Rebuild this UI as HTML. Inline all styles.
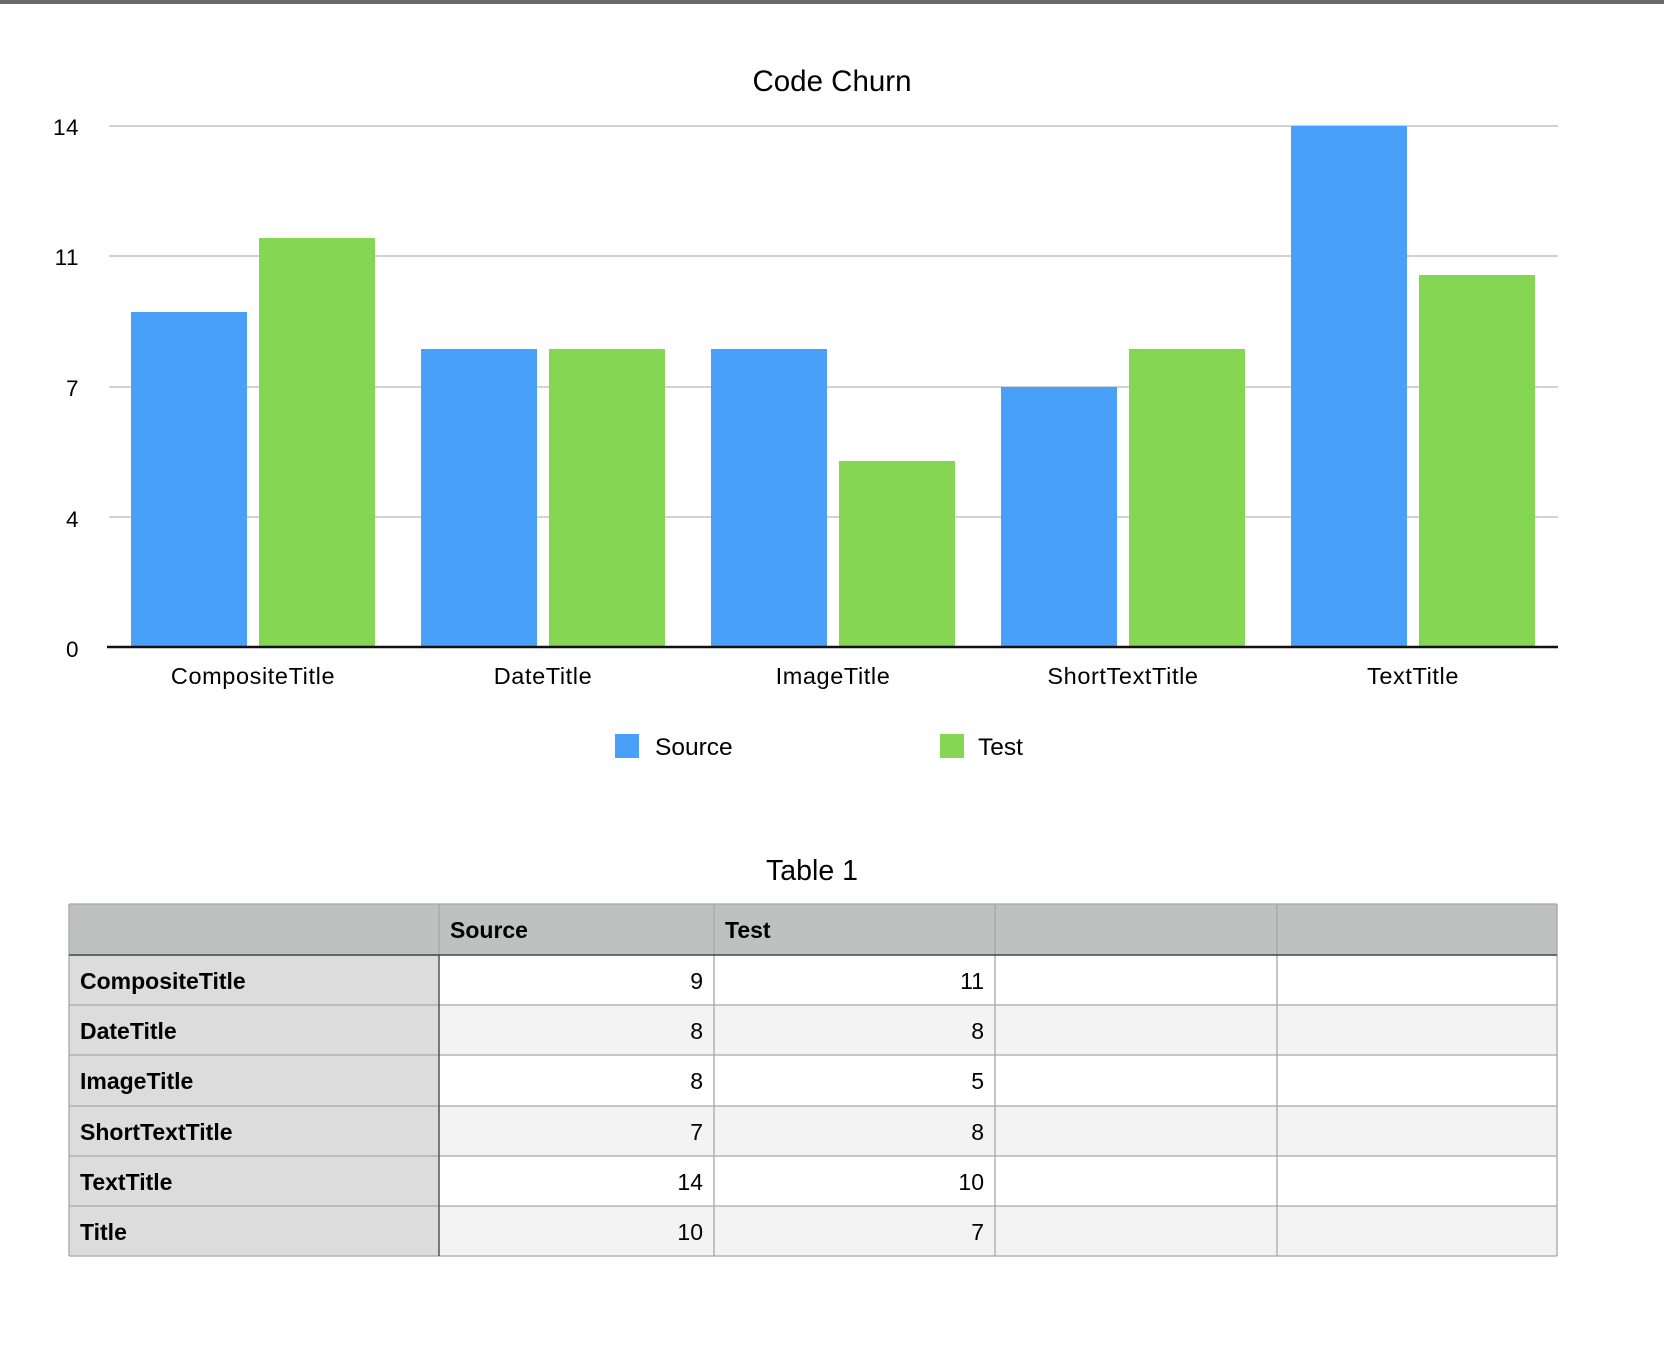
<!DOCTYPE html>
<html><head><meta charset="utf-8"><style>
html,body{margin:0;padding:0;background:#fff;width:1664px;height:1352px;overflow:hidden}
svg{display:block}
text{font-family:"Liberation Sans",Arial,sans-serif;fill:#000}
</style></head><body>
<svg width="1664" height="1352" viewBox="0 0 1664 1352" xmlns="http://www.w3.org/2000/svg">
<rect x="0" y="0" width="1664" height="4" fill="#6b6968"/>
<text x="832" y="91" font-size="29.5" text-anchor="middle">Code Churn</text>
<g stroke="#c4c4c4" stroke-width="1.5">
<line x1="109" y1="126" x2="1558" y2="126"/>
<line x1="109" y1="256" x2="1558" y2="256"/>
<line x1="109" y1="387" x2="1558" y2="387"/>
<line x1="109" y1="517" x2="1558" y2="517"/>
</g>
<g font-size="22.5" text-anchor="end" letter-spacing="0.5">
<text x="79" y="135">14</text>
<text x="79" y="265">11</text>
<text x="79" y="396">7</text>
<text x="79" y="527">4</text>
<text x="79" y="657">0</text>
</g>
<g fill="#48a0f8">
<rect x="131" y="312" width="116" height="335"/>
<rect x="421" y="349" width="116" height="298"/>
<rect x="711" y="349" width="116" height="298"/>
<rect x="1001" y="387" width="116" height="260"/>
<rect x="1291" y="126" width="116" height="521"/>
</g>
<g fill="#84d653">
<rect x="259" y="238" width="116" height="409"/>
<rect x="549" y="349" width="116" height="298"/>
<rect x="839" y="461" width="116" height="186"/>
<rect x="1129" y="349" width="116" height="298"/>
<rect x="1419" y="275" width="116" height="372"/>
</g>
<line x1="107" y1="647" x2="1558" y2="647" stroke="#111" stroke-width="2.5"/>
<g font-size="23.5" text-anchor="middle" letter-spacing="0.6">
<text x="253" y="684">CompositeTitle</text>
<text x="543" y="684">DateTitle</text>
<text x="833" y="684">ImageTitle</text>
<text x="1123" y="684">ShortTextTitle</text>
<text x="1413" y="684">TextTitle</text>
</g>
<rect x="615" y="734" width="24" height="24" fill="#48a0f8"/>
<text x="655" y="755" font-size="24.5">Source</text>
<rect x="940" y="734" width="24" height="24" fill="#84d653"/>
<text x="978" y="755" font-size="24.5">Test</text>
<text x="812" y="880" font-size="28.5" text-anchor="middle">Table 1</text>
<rect x="69" y="904" width="1488" height="51" fill="#bfc1c0"/>
<rect x="69" y="955" width="370" height="301" fill="#dcdcdc"/>
<rect x="439" y="955" width="1118" height="50" fill="#fff"/>
<rect x="439" y="1005" width="1118" height="50" fill="#f3f3f3"/>
<rect x="439" y="1055" width="1118" height="51" fill="#fff"/>
<rect x="439" y="1106" width="1118" height="50" fill="#f3f3f3"/>
<rect x="439" y="1156" width="1118" height="50" fill="#fff"/>
<rect x="439" y="1206" width="1118" height="50" fill="#f3f3f3"/>
<g stroke="#a8a8a8" stroke-width="1.3">
<line x1="69" y1="1005" x2="1557" y2="1005"/>
<line x1="69" y1="1055" x2="1557" y2="1055"/>
<line x1="69" y1="1106" x2="1557" y2="1106"/>
<line x1="69" y1="1156" x2="1557" y2="1156"/>
<line x1="69" y1="1206" x2="1557" y2="1206"/>
<line x1="69" y1="1256" x2="1557" y2="1256"/>
<line x1="69" y1="904" x2="1557" y2="904"/>
<line x1="69" y1="904" x2="69" y2="1256"/>
<line x1="1557" y1="904" x2="1557" y2="1256"/>
<line x1="714" y1="904" x2="714" y2="1256"/>
<line x1="995" y1="904" x2="995" y2="1256"/>
<line x1="1277" y1="904" x2="1277" y2="1256"/>
<line x1="439" y1="904" x2="439" y2="955"/>
</g>
<line x1="439" y1="955" x2="439" y2="1256" stroke="#555" stroke-width="1.5"/>
<line x1="69" y1="955" x2="1557" y2="955" stroke="#444" stroke-width="1.5"/>
<g font-size="23" font-weight="bold">
<text x="450" y="938">Source</text>
<text x="725" y="938">Test</text>
<text x="80" y="989">CompositeTitle</text>
<text x="80" y="1039">DateTitle</text>
<text x="80" y="1089">ImageTitle</text>
<text x="80" y="1140">ShortTextTitle</text>
<text x="80" y="1190">TextTitle</text>
<text x="80" y="1240">Title</text>
</g>
<g font-size="23" text-anchor="end">
<text x="703" y="989">9</text><text x="984" y="989">11</text>
<text x="703" y="1039">8</text><text x="984" y="1039">8</text>
<text x="703" y="1089">8</text><text x="984" y="1089">5</text>
<text x="703" y="1140">7</text><text x="984" y="1140">8</text>
<text x="703" y="1190">14</text><text x="984" y="1190">10</text>
<text x="703" y="1240">10</text><text x="984" y="1240">7</text>
</g>
</svg>
</body></html>
